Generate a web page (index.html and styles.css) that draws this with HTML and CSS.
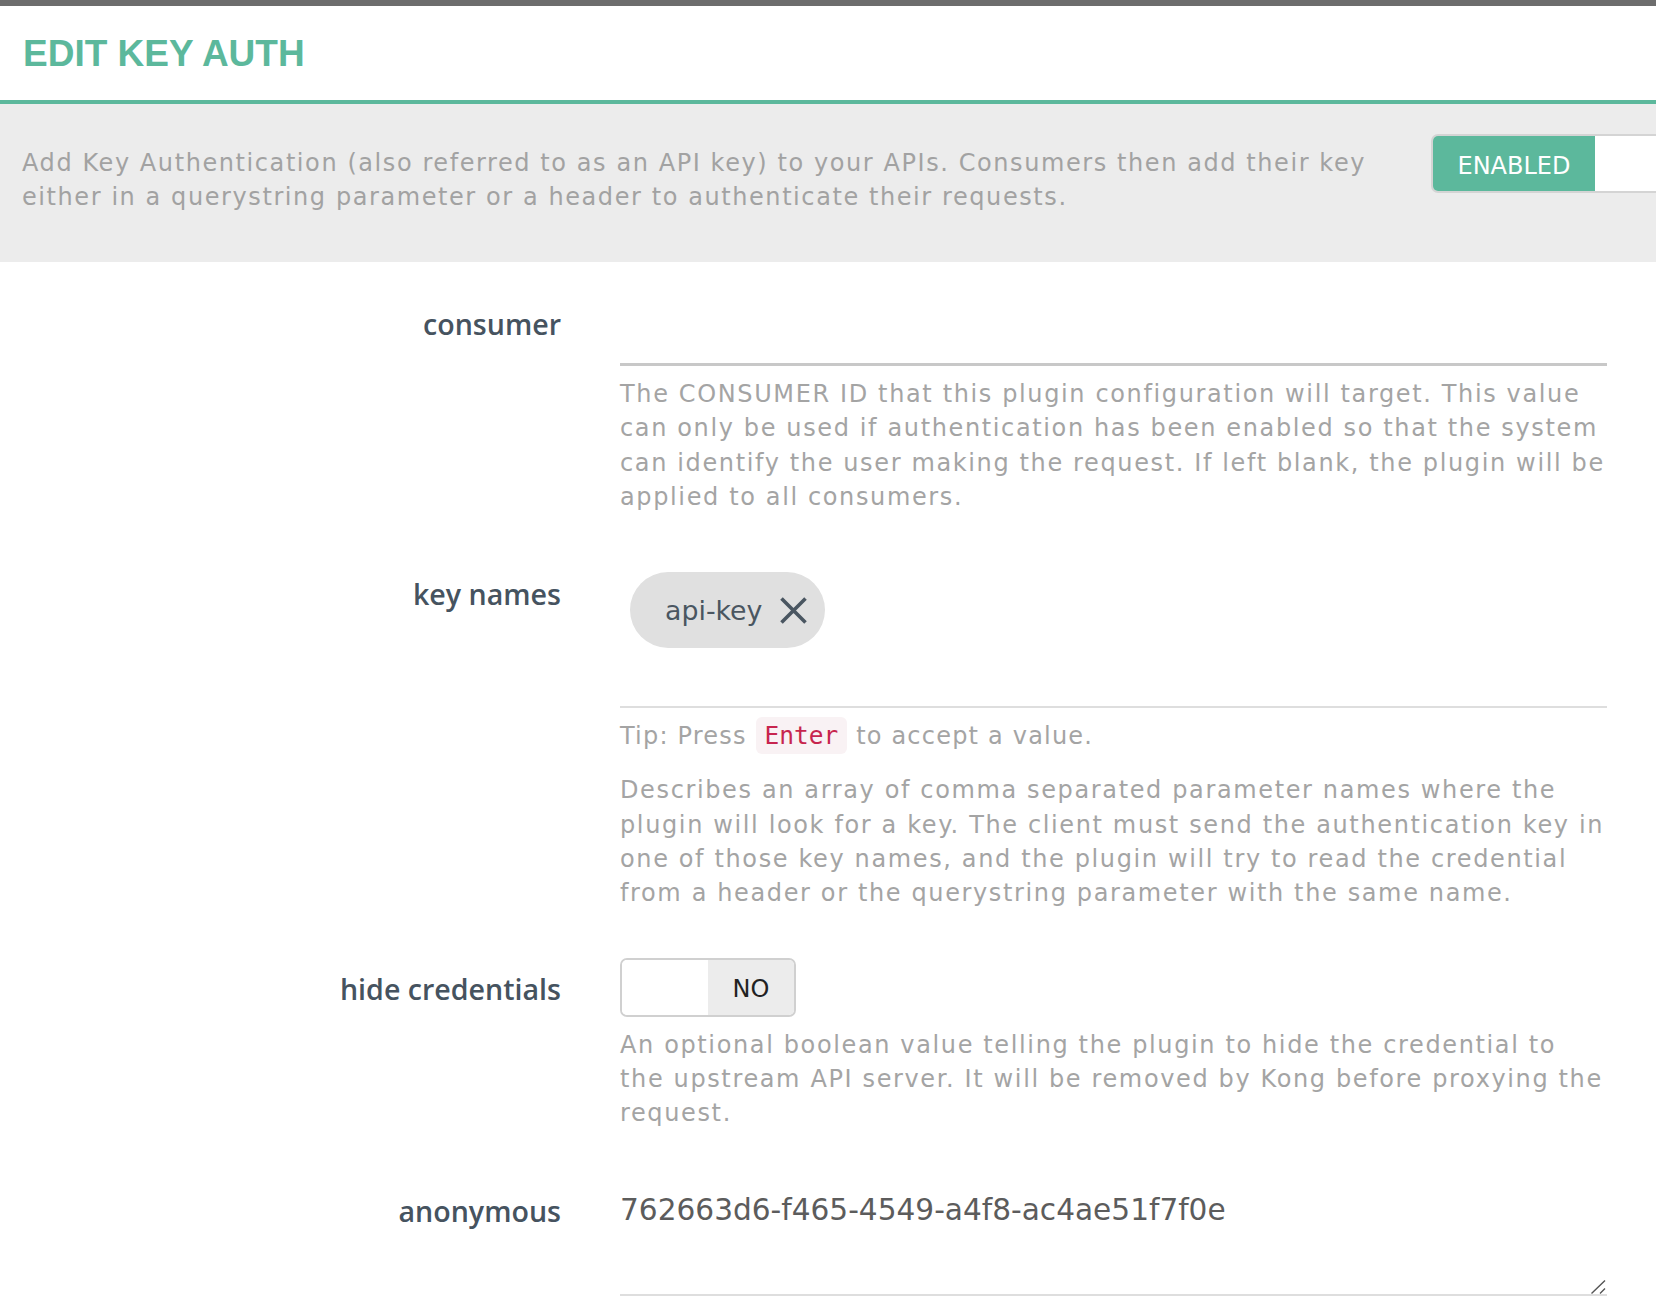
FILE: index.html
```html
<!DOCTYPE html>
<html lang="en">
<head>
<meta charset="utf-8">
<title>Edit Key Auth</title>
<link rel="stylesheet" href="styles.css">
</head>
<body>
<div class="topbar"></div>
<header class="header">
  <h1 class="title">EDIT KEY AUTH</h1>
</header>
<section class="intro">
  <p class="intro-text">Add Key Authentication (also referred to as an API key) to your APIs. Consumers then add their key either in a querystring parameter or a header to authenticate their requests.</p>
  <div class="switch">
    <span class="switch-on">ENABLED</span>
    <span class="switch-off"></span>
  </div>
</section>
<form class="form">
  <div class="row row-consumer">
    <label class="label">consumer</label>
    <div class="control">
      <input class="text-input" type="text">
      <p class="help">The CONSUMER ID that this plugin configuration will target. This value can only be used if authentication has been enabled so that the system can identify the user making the request. If left blank, the plugin will be applied to all consumers.</p>
    </div>
  </div>
  <div class="row row-keys">
    <label class="label">key names</label>
    <div class="control">
      <div class="tags">
        <span class="chip">api-key<svg class="chip-x" viewBox="0 0 27 27" width="27" height="27"><path d="M1.5 1.5 L25.5 25.5 M25.5 1.5 L1.5 25.5" stroke="#4a5661" stroke-width="3.6" fill="none"/></svg></span>
      </div>
      <p class="tip">Tip: Press <code class="code">Enter</code> to accept a value.</p>
      <p class="help help-keys">Describes an array of comma separated parameter names where the plugin will look for a key. The client must send the authentication key in one of those key names, and the plugin will try to read the credential from a header or the querystring parameter with the same name.</p>
    </div>
  </div>
  <div class="row row-hide">
    <label class="label">hide credentials</label>
    <div class="control">
      <div class="bool">
        <span class="bool-off"></span>
        <span class="bool-no">NO</span>
      </div>
      <p class="help help-hide">An optional boolean value telling the plugin to hide the credential to the upstream API server. It will be removed by Kong before proxying the request.</p>
    </div>
  </div>
  <div class="row row-anon">
    <label class="label">anonymous</label>
    <div class="control">
      <div class="textarea-wrap">
        <textarea class="textarea" readonly>762663d6-f465-4549-a4f8-ac4ae51f7f0e</textarea>
        <svg class="resizer" viewBox="0 0 15 14" width="15" height="14"><path d="M0.5 13.5 L14 0.5 M9 13.5 L14 8.5" stroke="#555555" stroke-width="1.4" fill="none"/></svg>
      </div>
    </div>
  </div>
</form>
</body>
</html>
```

FILE: styles.css
```css
* {
  box-sizing: border-box;
}

html,
body {
  margin: 0;
  padding: 0;
}

body {
  width: 1656px;
  height: 1312px;
  overflow: hidden;
  background: #ffffff;
  font-family: "DejaVu Sans", "Noto Sans", sans-serif;
  color: #a4a4a4;
}

.topbar {
  height: 6px;
  background: #6d6d6d;
}

.header {
  height: 98px;
  padding: 30px 0 0 23px;
  border-bottom: 4px solid #5cb89c;
}

.title {
  margin: 0;
  font-family: "Liberation Sans", Arial, sans-serif;
  font-weight: 700;
  font-size: 37px;
  line-height: 36px;
  color: #5cb89c;
}

.intro {
  display: flex;
  align-items: flex-start;
  height: 158px;
  padding: 0 0 0 22px;
  background: #ececec;
  overflow: hidden;
}

.intro-text {
  flex: 0 0 1385px;
  margin: 0;
  padding-top: 42px;
  font-size: 24px;
  line-height: 34.3px;
  letter-spacing: 1.58px;
  color: #a2a2a2;
}

.switch {
  flex: 0 0 auto;
  display: flex;
  margin: 30px 0 0 24px;
  height: 59px;
  border: 2px solid #d4d4d4;
  border-radius: 7px;
  overflow: hidden;
}

.switch-on {
  width: 162px;
  display: flex;
  align-items: center;
  justify-content: center;
  padding-top: 4px;
  background: #5cb89c;
  color: #ffffff;
  font-size: 24px;
}

.switch-off {
  width: 162px;
  background: #ffffff;
}

.form {
  padding-top: 38px;
}

.row {
  display: grid;
  grid-template-columns: 561px 987px;
  column-gap: 59px;
}

.label {
  text-align: right;
  font-family: "Open Sans", "DejaVu Sans", sans-serif;
  font-weight: 600;
  font-size: 28.6px;
  line-height: 34px;
  color: #46535f;
}

.control {
  min-width: 0;
}

.help,
.tip {
  margin: 11px 0 0;
  font-size: 24px;
  line-height: 34.3px;
  letter-spacing: 1.63px;
  color: #a4a4a4;
}

.help {
  margin-right: -5px;
}

.help-hide {
  margin-right: 3px;
}

.tip {
  letter-spacing: 1.2px;
}

.help-keys {
  margin-top: 20px;
}

/* consumer */
.row-consumer {
  margin-bottom: 58px;
}

.row-consumer .label {
  padding-top: 7px;
}

.text-input {
  display: block;
  width: 100%;
  height: 66px;
  margin: 0;
  padding: 0;
  border: none;
  border-bottom: 3px solid #c8c8c8;
  background: transparent;
  font-family: "DejaVu Sans", sans-serif;
  font-size: 24px;
  outline: none;
}

/* key names */
.row-keys {
  margin-bottom: 47px;
}

.row-keys .label {
  padding-top: 5px;
}

.tags {
  height: 136px;
  padding: 0 0 0 10px;
  border-bottom: 2px solid #dedede;
}

.chip {
  display: inline-flex;
  align-items: center;
  height: 76px;
  padding: 0 18px 0 35px;
  border-radius: 38px;
  background: #e0e0e0;
  color: #4a5661;
  font-size: 26.8px;
}

.chip-x {
  display: block;
  margin-left: 18px;
  width: 27px;
  height: 27px;
}

.code {
  padding: 4px 9px;
  border-radius: 6px;
  background: #f9f2f4;
  color: #c7254e;
  font-family: "DejaVu Sans Mono", "Liberation Mono", monospace;
  font-size: 24.5px;
  letter-spacing: 0;
}

/* hide credentials */
.row-hide {
  margin-bottom: 49px;
}

.row-hide .label {
  padding-top: 14px;
}

.bool {
  display: flex;
  width: 176px;
  height: 59px;
  border: 2px solid #d0d0d0;
  border-radius: 7px;
  overflow: hidden;
}

.bool-off {
  width: 86px;
  background: #ffffff;
}

.bool-no {
  width: 86px;
  display: flex;
  align-items: center;
  justify-content: center;
  padding-top: 3px;
  background: #ececec;
  color: #222222;
  font-size: 24px;
}

/* anonymous */
.row-anon .label {
  padding-top: 14px;
}

.textarea-wrap {
  position: relative;
}

.textarea {
  display: block;
  width: 100%;
  height: 116px;
  margin: 0;
  padding: 10px 0 0;
  border: none;
  border-bottom: 2px solid #dedede;
  border-radius: 0;
  background: transparent;
  font-family: "DejaVu Sans", sans-serif;
  font-size: 29.6px;
  line-height: 40px;
  color: #5c5c5c;
  outline: none;
  resize: none;
}

.resizer {
  position: absolute;
  right: 1px;
  bottom: 2px;
  width: 15px;
  height: 14px;
}
```
